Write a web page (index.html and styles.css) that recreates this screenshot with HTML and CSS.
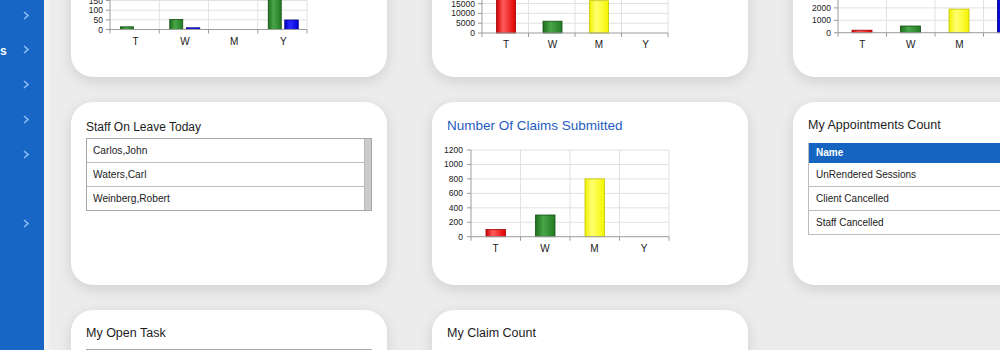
FILE: index.html
```html
<!DOCTYPE html>
<html lang="en">
<head>
<meta charset="utf-8">
<title>Dashboard</title>
<link rel="stylesheet" href="styles.css">
</head>
<body>
<div class="app">
  <aside class="sidebar">
    <ul class="nav">
      <li class="nav-item"><svg class="chev" viewBox="0 0 6 9"><polyline points="1,1 5,4.5 1,8"/></svg></li>
      <li class="nav-item"><span class="nav-label">s</span><svg class="chev" viewBox="0 0 6 9"><polyline points="1,1 5,4.5 1,8"/></svg></li>
      <li class="nav-item"><svg class="chev" viewBox="0 0 6 9"><polyline points="1,1 5,4.5 1,8"/></svg></li>
      <li class="nav-item"><svg class="chev" viewBox="0 0 6 9"><polyline points="1,1 5,4.5 1,8"/></svg></li>
      <li class="nav-item"><svg class="chev" viewBox="0 0 6 9"><polyline points="1,1 5,4.5 1,8"/></svg></li>
      <li class="nav-item"></li>
      <li class="nav-item"><svg class="chev" viewBox="0 0 6 9"><polyline points="1,1 5,4.5 1,8"/></svg></li>
    </ul>
  </aside>
  <main class="main">
    <div class="grid">
      <!-- Row 1 -->
      <section class="card">
        <div class="chart-head"></div>
        <svg class="chart" width="240" height="120" viewBox="0 0 240 120">
          <defs>
            <linearGradient id="gR" x1="0" x2="1" y1="0" y2="0"><stop offset="0" stop-color="#d00000"/><stop offset="0.35" stop-color="#ff5c5c"/><stop offset="1" stop-color="#e00000"/></linearGradient>
            <linearGradient id="gG" x1="0" x2="1" y1="0" y2="0"><stop offset="0" stop-color="#1f6e1f"/><stop offset="0.4" stop-color="#47a747"/><stop offset="1" stop-color="#237a23"/></linearGradient>
            <linearGradient id="gY" x1="0" x2="1" y1="0" y2="0"><stop offset="0" stop-color="#f0f000"/><stop offset="0.35" stop-color="#ffff70"/><stop offset="1" stop-color="#f5f500"/></linearGradient>
            <linearGradient id="gB" x1="0" x2="1" y1="0" y2="0"><stop offset="0" stop-color="#0000c8"/><stop offset="0.4" stop-color="#2b2bff"/><stop offset="1" stop-color="#0000d4"/></linearGradient>
          </defs>
          <g class="grid-h">
            <line x1="24" x2="221" y1="85.85" y2="85.85"/><line x1="24" x2="221" y1="76.2" y2="76.2"/><line x1="24" x2="221" y1="66.55" y2="66.55"/><line x1="24" x2="221" y1="56.9" y2="56.9"/><line x1="24" x2="221" y1="47.25" y2="47.25"/><line x1="24" x2="221" y1="37.6" y2="37.6"/><line x1="24" x2="221" y1="27.95" y2="27.95"/><line x1="24" x2="221" y1="18.3" y2="18.3"/><line x1="24" x2="221" y1="8.65" y2="8.65"/>
          </g>
          <g class="grid-v">
            <line x1="73.25" x2="73.25" y1="8.65" y2="95.5"/><line x1="122.5" x2="122.5" y1="8.65" y2="95.5"/><line x1="171.75" x2="171.75" y1="8.65" y2="95.5"/><line x1="221" x2="221" y1="8.65" y2="95.5"/>
          </g>
          <g class="bars">
            <rect class="bar-g" x="34.5" y="92.8" width="13" height="2.7"/>
            <rect class="bar-g" x="83.75" y="85.5" width="13" height="10"/>
            <rect class="bar-b" x="100.25" y="93.8" width="13.5" height="1.7"/>
            <rect class="bar-g" x="182.25" y="37.5" width="13" height="58"/>
            <rect class="bar-b" x="198.75" y="86" width="13.5" height="9.5"/>
          </g>
          <g class="axis">
            <line x1="24" x2="24" y1="8.65" y2="95.5"/><line x1="24" x2="221" y1="95.5" y2="95.5"/>
            <line x1="20" x2="24" y1="95.5" y2="95.5"/><line x1="20" x2="24" y1="85.85" y2="85.85"/><line x1="20" x2="24" y1="76.2" y2="76.2"/><line x1="20" x2="24" y1="66.55" y2="66.55"/><line x1="20" x2="24" y1="56.9" y2="56.9"/><line x1="20" x2="24" y1="47.25" y2="47.25"/><line x1="20" x2="24" y1="37.6" y2="37.6"/><line x1="20" x2="24" y1="27.95" y2="27.95"/><line x1="20" x2="24" y1="18.3" y2="18.3"/><line x1="20" x2="24" y1="8.65" y2="8.65"/>
            <line x1="24" x2="24" y1="95.5" y2="99.5"/><line x1="73.25" x2="73.25" y1="95.5" y2="99.5"/><line x1="122.5" x2="122.5" y1="95.5" y2="99.5"/><line x1="171.75" x2="171.75" y1="95.5" y2="99.5"/><line x1="221" x2="221" y1="95.5" y2="99.5"/>
          </g>
          <g class="ylab">
            <text x="17" y="98.5">0</text><text x="17" y="88.85">50</text><text x="17" y="79.2">100</text><text x="17" y="69.55">150</text>
          </g>
          <g class="xlab">
            <text x="49.6" y="111">T</text><text x="98.9" y="111">W</text><text x="148.1" y="111">M</text><text x="197.4" y="111">Y</text>
          </g>
        </svg>
      </section>

      <section class="card">
        <div class="chart-head"></div>
        <svg class="chart" width="240" height="120" viewBox="0 0 240 120">
          <g class="grid-h">
            <line x1="35" x2="221" y1="89.2" y2="89.2"/><line x1="35" x2="221" y1="79.4" y2="79.4"/><line x1="35" x2="221" y1="69.6" y2="69.6"/><line x1="35" x2="221" y1="59.8" y2="59.8"/><line x1="35" x2="221" y1="50" y2="50"/><line x1="35" x2="221" y1="40.2" y2="40.2"/><line x1="35" x2="221" y1="30.4" y2="30.4"/><line x1="35" x2="221" y1="20.6" y2="20.6"/><line x1="35" x2="221" y1="10.8" y2="10.8"/>
          </g>
          <g class="grid-v">
            <line x1="81.5" x2="81.5" y1="10.8" y2="99"/><line x1="128" x2="128" y1="10.8" y2="99"/><line x1="174.5" x2="174.5" y1="10.8" y2="99"/><line x1="221" x2="221" y1="10.8" y2="99"/>
          </g>
          <g class="bars">
            <rect class="bar-r" x="49.5" y="61.8" width="19" height="37.2"/>
            <rect class="bar-g" x="96" y="87.2" width="19" height="11.8"/>
            <rect class="bar-y" x="142.5" y="66.7" width="19" height="32.3"/>
          </g>
          <g class="axis">
            <line x1="35" x2="35" y1="10.8" y2="99"/><line x1="35" x2="221" y1="99" y2="99"/>
            <line x1="31" x2="35" y1="99" y2="99"/><line x1="31" x2="35" y1="89.2" y2="89.2"/><line x1="31" x2="35" y1="79.4" y2="79.4"/><line x1="31" x2="35" y1="69.6" y2="69.6"/><line x1="31" x2="35" y1="59.8" y2="59.8"/><line x1="31" x2="35" y1="50" y2="50"/><line x1="31" x2="35" y1="40.2" y2="40.2"/><line x1="31" x2="35" y1="30.4" y2="30.4"/><line x1="31" x2="35" y1="20.6" y2="20.6"/><line x1="31" x2="35" y1="10.8" y2="10.8"/>
            <line x1="35" x2="35" y1="99" y2="103"/><line x1="81.5" x2="81.5" y1="99" y2="103"/><line x1="128" x2="128" y1="99" y2="103"/><line x1="174.5" x2="174.5" y1="99" y2="103"/><line x1="221" x2="221" y1="99" y2="103"/>
          </g>
          <g class="ylab">
            <text x="28" y="102">0</text><text x="28" y="92.2">5000</text><text x="28" y="82.4">10000</text><text x="28" y="72.6">15000</text>
          </g>
          <g class="xlab">
            <text x="59" y="114">T</text><text x="105.5" y="114">W</text><text x="152" y="114">M</text><text x="198.5" y="114">Y</text>
          </g>
        </svg>
      </section>

      <section class="card">
        <div class="chart-head"></div>
        <svg class="chart" width="240" height="120" viewBox="0 0 240 120">
          <g class="grid-h">
            <line x1="30" x2="224" y1="86.3" y2="86.3"/><line x1="30" x2="224" y1="73.9" y2="73.9"/><line x1="30" x2="224" y1="61.5" y2="61.5"/><line x1="30" x2="224" y1="49.1" y2="49.1"/><line x1="30" x2="224" y1="36.7" y2="36.7"/><line x1="30" x2="224" y1="24.3" y2="24.3"/><line x1="30" x2="224" y1="11.9" y2="11.9"/>
          </g>
          <g class="grid-v">
            <line x1="78.5" x2="78.5" y1="11.9" y2="98.7"/><line x1="127" x2="127" y1="11.9" y2="98.7"/><line x1="175.5" x2="175.5" y1="11.9" y2="98.7"/><line x1="224" x2="224" y1="11.9" y2="98.7"/>
          </g>
          <g class="bars">
            <rect class="bar-r" x="44" y="96.2" width="20" height="2.5"/>
            <rect class="bar-g" x="92.5" y="92" width="20" height="6.7"/>
            <rect class="bar-y" x="141" y="75.1" width="20" height="23.6"/>
            <rect class="bar-b" x="189.5" y="30.7" width="20" height="68"/>
          </g>
          <g class="axis">
            <line x1="30" x2="30" y1="11.9" y2="98.7"/><line x1="30" x2="224" y1="98.7" y2="98.7"/>
            <line x1="26" x2="30" y1="98.7" y2="98.7"/><line x1="26" x2="30" y1="86.3" y2="86.3"/><line x1="26" x2="30" y1="73.9" y2="73.9"/><line x1="26" x2="30" y1="61.5" y2="61.5"/><line x1="26" x2="30" y1="49.1" y2="49.1"/><line x1="26" x2="30" y1="36.7" y2="36.7"/><line x1="26" x2="30" y1="24.3" y2="24.3"/><line x1="26" x2="30" y1="11.9" y2="11.9"/>
            <line x1="30" x2="30" y1="98.7" y2="102.7"/><line x1="78.5" x2="78.5" y1="98.7" y2="102.7"/><line x1="127" x2="127" y1="98.7" y2="102.7"/><line x1="175.5" x2="175.5" y1="98.7" y2="102.7"/><line x1="224" x2="224" y1="98.7" y2="102.7"/>
          </g>
          <g class="ylab">
            <text x="23" y="101.7">0</text><text x="23" y="89.3">1000</text><text x="23" y="76.9">2000</text>
          </g>
          <g class="xlab">
            <text x="54.3" y="114">T</text><text x="102.8" y="114">W</text><text x="151.3" y="114">M</text>
          </g>
        </svg>
      </section>

      <!-- Row 2 -->
      <section class="card">
        <h2 class="title title-staff">Staff On Leave Today</h2>
        <div class="list">
          <ul class="list-rows">
            <li class="list-row">Carlos,John</li>
            <li class="list-row">Waters,Carl</li>
            <li class="list-row">Weinberg,Robert</li>
          </ul>
          <div class="scrollbar"></div>
        </div>
      </section>

      <section class="card">
        <h2 class="title title-link">Number Of Claims Submitted</h2>
        <svg class="chart" width="240" height="120" viewBox="0 0 240 120">
          <g class="grid-h">
            <line x1="24" x2="222" y1="80.25" y2="80.25"/><line x1="24" x2="222" y1="65.8" y2="65.8"/><line x1="24" x2="222" y1="51.35" y2="51.35"/><line x1="24" x2="222" y1="36.9" y2="36.9"/><line x1="24" x2="222" y1="22.45" y2="22.45"/><line x1="24" x2="222" y1="8" y2="8"/>
          </g>
          <g class="grid-v">
            <line x1="73.5" x2="73.5" y1="8" y2="94.7"/><line x1="123" x2="123" y1="8" y2="94.7"/><line x1="172.5" x2="172.5" y1="8" y2="94.7"/><line x1="222" x2="222" y1="8" y2="94.7"/>
          </g>
          <g class="bars">
            <rect class="bar-r" x="39" y="87.5" width="19.5" height="7.2"/>
            <rect class="bar-g" x="88.5" y="73" width="19.5" height="21.7"/>
            <rect class="bar-y" x="138" y="36.9" width="19.5" height="57.8"/>
          </g>
          <g class="axis">
            <line x1="24" x2="24" y1="8" y2="94.7"/><line x1="24" x2="222" y1="94.7" y2="94.7"/>
            <line x1="20" x2="24" y1="94.7" y2="94.7"/><line x1="20" x2="24" y1="80.25" y2="80.25"/><line x1="20" x2="24" y1="65.8" y2="65.8"/><line x1="20" x2="24" y1="51.35" y2="51.35"/><line x1="20" x2="24" y1="36.9" y2="36.9"/><line x1="20" x2="24" y1="22.45" y2="22.45"/><line x1="20" x2="24" y1="8" y2="8"/>
            <line x1="24" x2="24" y1="94.7" y2="98.7"/><line x1="73.5" x2="73.5" y1="94.7" y2="98.7"/><line x1="123" x2="123" y1="94.7" y2="98.7"/><line x1="172.5" x2="172.5" y1="94.7" y2="98.7"/><line x1="222" x2="222" y1="94.7" y2="98.7"/>
          </g>
          <g class="ylab">
            <text x="16" y="97.7">0</text><text x="16" y="83.25">200</text><text x="16" y="68.8">400</text><text x="16" y="54.35">600</text><text x="16" y="39.9">800</text><text x="16" y="25.45">1000</text><text x="16" y="11">1200</text>
          </g>
          <g class="xlab">
            <text x="48.5" y="110">T</text><text x="98" y="110">W</text><text x="147.5" y="110">M</text><text x="197" y="110">Y</text>
          </g>
        </svg>
      </section>

      <section class="card">
        <h2 class="title title-appt">My Appointments Count</h2>
        <div class="table">
          <div class="table-head">Name</div>
          <div class="table-row">UnRendered Sessions</div>
          <div class="table-row">Client Cancelled</div>
          <div class="table-row">Staff Cancelled</div>
        </div>
      </section>

      <!-- Row 3 -->
      <section class="card">
        <h2 class="title title-task">My Open Task</h2>
        <div class="task-box"></div>
      </section>

      <section class="card">
        <h2 class="title">My Claim Count</h2>
      </section>
    </div>
  </main>
</div>
</body>
</html>
```

FILE: styles.css
```css
* {
  box-sizing: border-box;
}

body {
  margin: 0;
  font-family: "Liberation Sans", Arial, sans-serif;
  color: #1d1d1d;
}

.app {
  display: flex;
  width: 1000px;
  height: 350px;
  overflow: hidden;
}

/* Sidebar */
.sidebar {
  flex: 0 0 44px;
  background: #1766c6;
  overflow: hidden;
}

.nav {
  list-style: none;
  margin: -2.4px 0 0;
  padding: 0;
}

.nav-item {
  height: 34.8px;
  display: flex;
  align-items: center;
  padding-right: 15px;
}

.nav-label {
  color: #ffffff;
  font-weight: bold;
  font-size: 12px;
  margin-top: 3px;
}

.chev {
  width: 6px;
  height: 9px;
  margin-left: auto;
  display: block;
}

.chev polyline {
  fill: none;
  stroke: #8dbaf2;
  stroke-width: 1.6;
}

/* Main */
.main {
  flex: 1;
  min-width: 0;
  overflow: hidden;
  background: linear-gradient(90deg, #f5f5f5 0, #ececec 8px, #ececec 100%);
  padding-left: 27px;
}

.grid {
  display: grid;
  grid-template-columns: repeat(3, 316px);
  grid-auto-rows: 183px;
  column-gap: 45px;
  row-gap: 25px;
  margin-top: -106px;
}

.card {
  background: #ffffff;
  border-radius: 22px;
  box-shadow: 0 4px 14px rgba(0, 0, 0, 0.12);
  padding: 16px 15px 0;
  overflow: hidden;
}

.chart-head {
  height: 24px;
}

.title {
  margin: 0;
  font-size: 12.5px;
  line-height: 15px;
  font-weight: normal;
  color: #1d1d1d;
}

.title-staff {
  font-size: 12px;
  line-height: 14px;
  margin: 2px 0 4px;
}

.title-link {
  font-size: 13.5px;
  line-height: 16px;
  color: #1f5cc2;
  margin-bottom: 8px;
}

.title-appt {
  margin-bottom: 10px;
}

.title-task {
  margin-bottom: 8px;
}

/* Charts */
.chart {
  display: block;
  overflow: visible;
}

.grid-h line,
.grid-v line {
  stroke: #e1e1e1;
  stroke-width: 1;
}

.axis line {
  stroke: #9c9c9c;
  stroke-width: 1;
}

.ylab text {
  font-family: "Liberation Sans", Arial, sans-serif;
  font-size: 8.5px;
  fill: #1a1a1a;
  text-anchor: end;
}

.xlab text {
  font-family: "Liberation Sans", Arial, sans-serif;
  font-size: 10px;
  fill: #1a1a1a;
  text-anchor: middle;
}

.bars rect {
  stroke-width: 0.8;
}

.bar-r {
  fill: url(#gR);
  stroke: #a00000;
}

.bar-g {
  fill: url(#gG);
  stroke: #134f13;
}

.bar-y {
  fill: url(#gY);
  stroke: #c4c400;
}

.bar-b {
  fill: url(#gB);
  stroke: #00008c;
}

/* Staff list */
.list {
  display: flex;
  border: 1px solid #a8a8a8;
}

.list-rows {
  flex: 1;
  list-style: none;
  margin: 0;
  padding: 0;
}

.list-row {
  height: 24px;
  border-bottom: 1px solid #bdbdbd;
  padding-left: 6px;
  font-size: 10.2px;
  color: #222222;
  display: flex;
  align-items: center;
}

.list-row:last-child {
  height: 23px;
  border-bottom: 0;
}

.scrollbar {
  width: 7px;
  background: #cbcbcb;
  border-left: 1px solid #b8b8b8;
}

/* Appointments table */
.table {
  width: 285px;
  border-left: 1px solid #bcbcbc;
}

.table-head {
  height: 19.5px;
  background: #1565c0;
  color: #ffffff;
  font-weight: bold;
  font-size: 10px;
  padding-left: 7px;
  display: flex;
  align-items: center;
}

.table-row {
  height: 24px;
  border-bottom: 1px solid #bcbcbc;
  padding-left: 7px;
  font-size: 10px;
  color: #222222;
  display: flex;
  align-items: center;
}

/* Open task */
.task-box {
  height: 80px;
  border: 1px solid #a8a8a8;
}
```
